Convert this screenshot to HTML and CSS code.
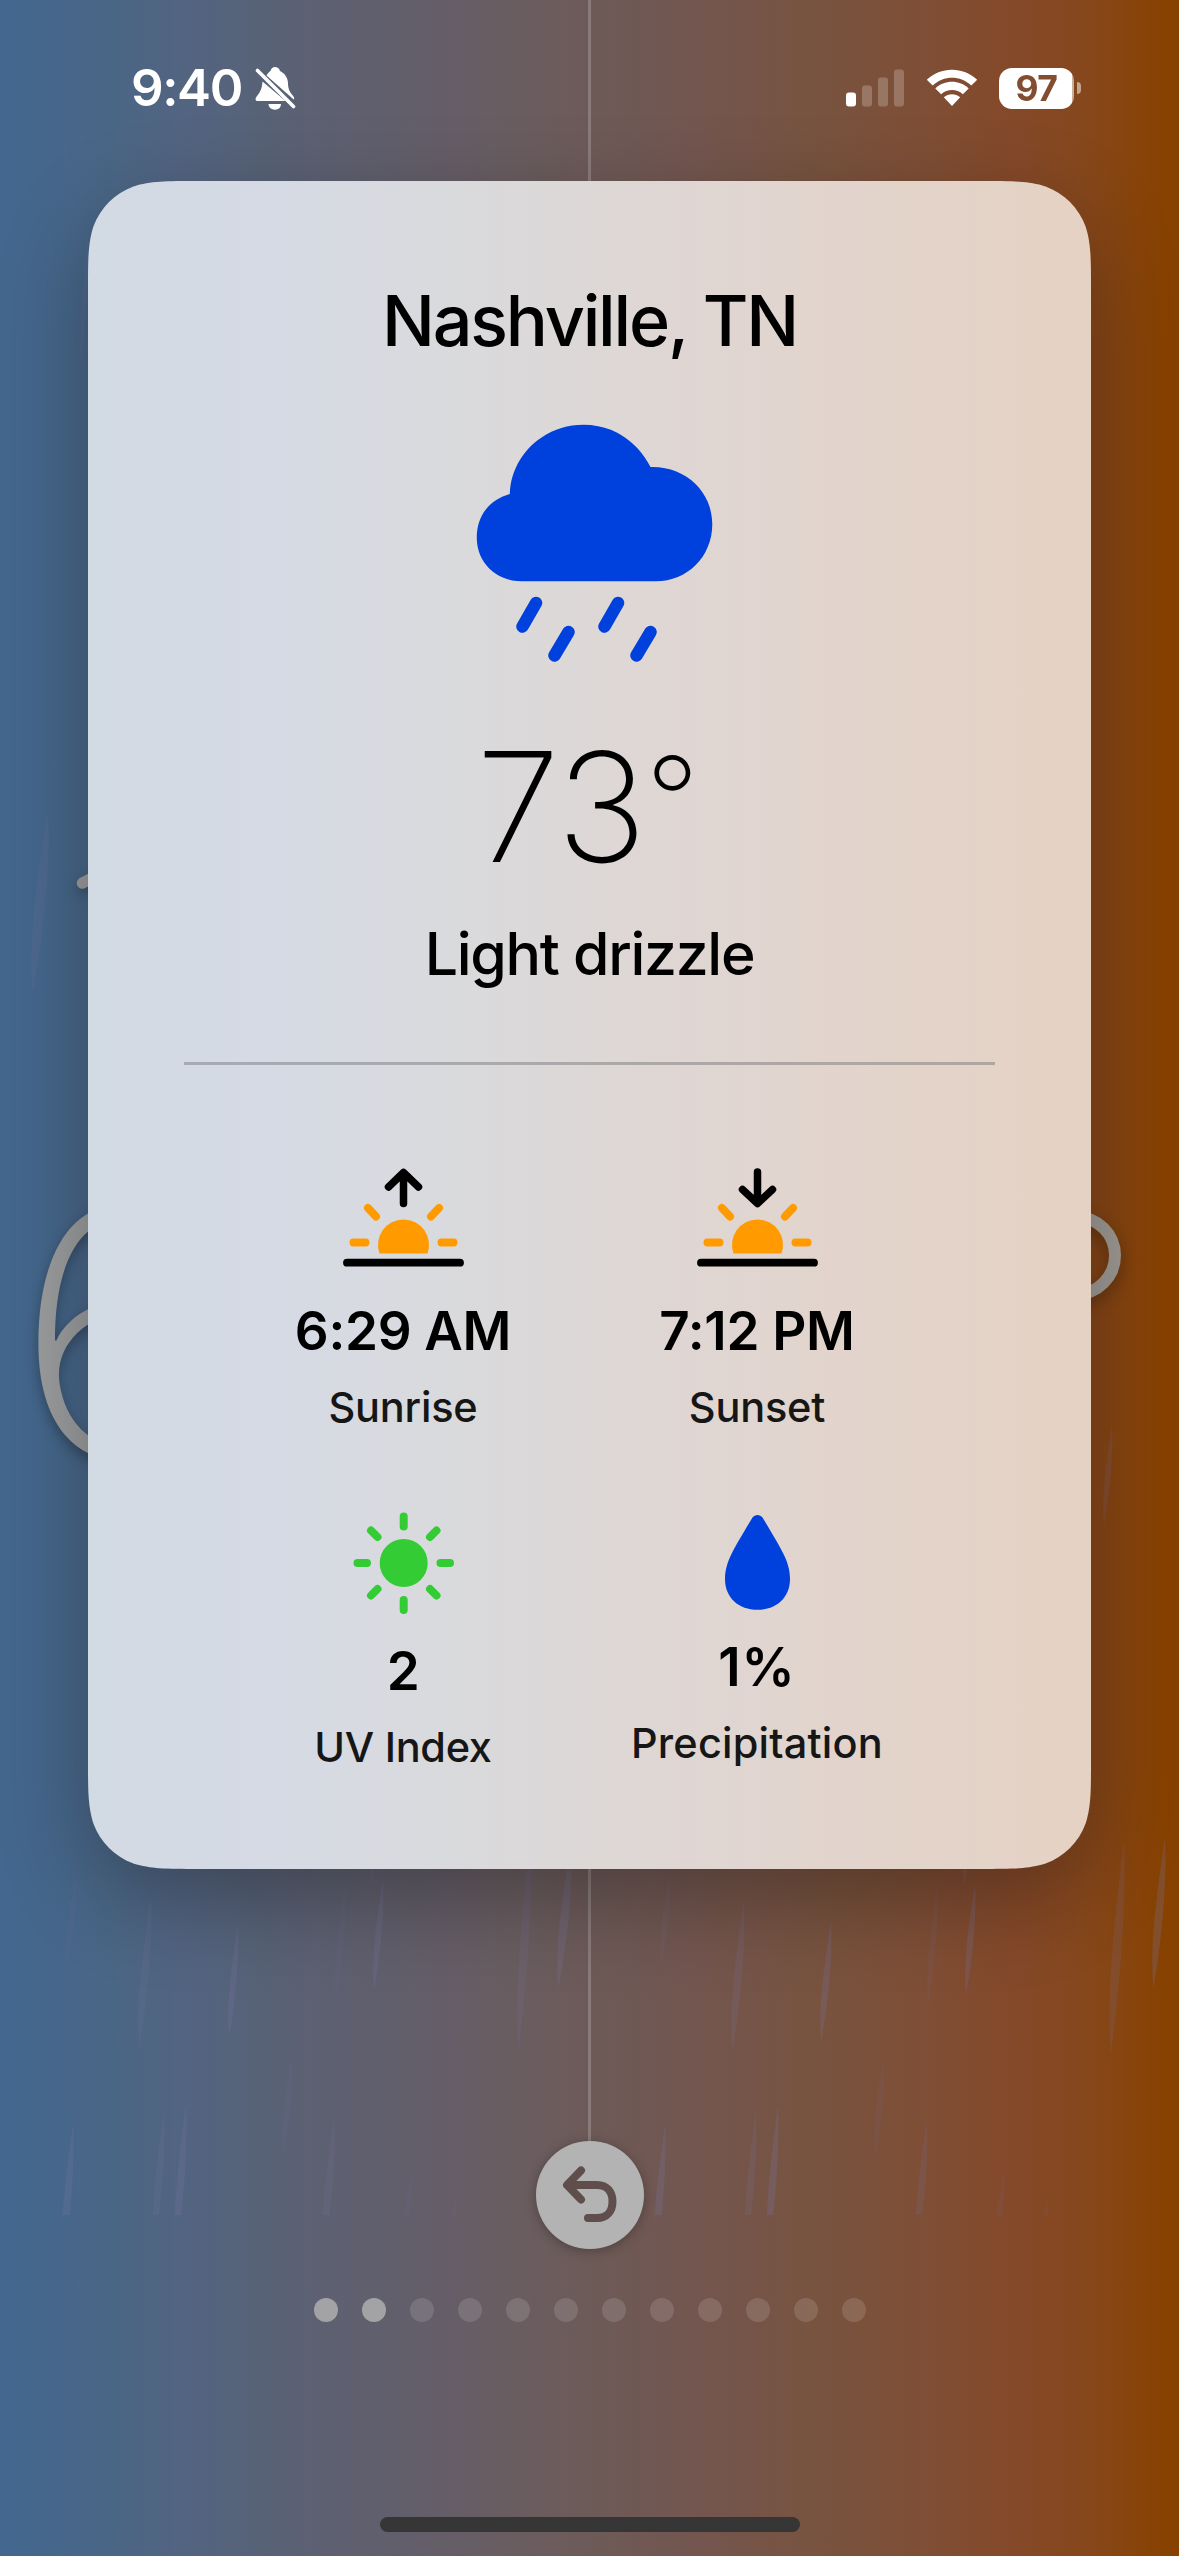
FILE: index.html
```html
<!DOCTYPE html>
<html lang="en">
<head>
<meta charset="utf-8">
<title>Weather</title>
<link rel="stylesheet" href="styles.css">
</head>
<body>
<div class="screen">
  <div class="scene" aria-hidden="true">
    <svg class="rain" width="1179" height="2215" viewBox="0 0 1179 2215">
      <defs><path id="drop" d="M10 0C12 35 6 75 1 100C-2 70 4 35 10 0Z"/></defs>
      <g class="rain-soft">
        <use href="#drop" transform="translate(80 230) scale(.8 1.4)"/>
        <use href="#drop" transform="translate(66 1874) scale(1 .94)"/>
        <use href="#drop" transform="translate(282 2056) scale(1 1)"/>
        <use href="#drop" transform="translate(335 1886) scale(1 1.14)"/>
        <use href="#drop" transform="translate(660 1874) scale(1 .92)"/>
        <use href="#drop" transform="translate(874 2055) scale(1 1.04)"/>
        <use href="#drop" transform="translate(927 1886) scale(1 1.2)"/>
        <use href="#drop" transform="translate(402 2170) scale(1 .9)"/>
        <use href="#drop" transform="translate(994 2170) scale(1 .9)"/>
        <use href="#drop" transform="translate(446 2198) scale(1 .6)"/>
        <use href="#drop" transform="translate(1038 2198) scale(1 .6)"/>
      </g>
      <g class="rain-mid">
        <use href="#drop" transform="translate(31 810) scale(1.7 1.84)"/>
        <use href="#drop" transform="translate(1103 1425) scale(.9 1)"/>
        <use href="#drop" transform="translate(138 1896) scale(1.3 1.51)"/>
        <use href="#drop" transform="translate(370 1790) scale(1 .97)"/>
        <use href="#drop" transform="translate(963 1790) scale(1 .97)"/>
        <use href="#drop" transform="translate(517 1830) scale(1.4 2.21)"/>
        <use href="#drop" transform="translate(731 1899) scale(1.3 1.53)"/>
        <use href="#drop" transform="translate(1109 1839) scale(1.5 2.16)"/>
        <use href="#drop" transform="translate(152 2109) scale(1.2 1.5)"/>
        <use href="#drop" transform="translate(744 2109) scale(1.2 1.5)"/>
        <use href="#drop" transform="translate(322 2119) scale(1.2 1.4)"/>
        <use href="#drop" transform="translate(915 2119) scale(1.2 1.4)"/>
      </g>
      <g class="rain-strong">
        <use href="#drop" transform="translate(228 1922) scale(1 1.16)"/>
        <use href="#drop" transform="translate(373 1878) scale(1 1.13)"/>
        <use href="#drop" transform="translate(557 1844) scale(1.4 1.44)"/>
        <use href="#drop" transform="translate(820 1922) scale(1.1 1.2)"/>
        <use href="#drop" transform="translate(965 1884) scale(1 1.1)"/>
        <use href="#drop" transform="translate(1152 1837) scale(1.3 1.52)"/>
        <use href="#drop" transform="translate(61 2124) scale(1.2 1.5)"/>
        <use href="#drop" transform="translate(653 2124) scale(1.2 1.5)"/>
        <use href="#drop" transform="translate(174 2104) scale(1.2 1.6)"/>
        <use href="#drop" transform="translate(766 2104) scale(1.2 1.6)"/>
      </g>
    </svg>
    <svg class="stroke-end" width="40" height="30" viewBox="72 864 40 30"><path d="M82.500 883L98 875"/></svg>
    <span class="temp-digit">6</span>
    <span class="temp-degree"></span>
    <span class="center-line"></span>
    <span class="card-shadow"></span>
  </div>

  <header class="status">
    <div class="status-left">
      <span class="clock">9:40</span>
      <svg class="bell" width="42" height="46" viewBox="254 65 42 46">
        <path class="white" d="M262.500 81.500L285.500 101H257.500C255 101 255 98.500 257 96C260.500 92 262 88 262.500 81.500Z"/>
        <path class="white" d="M266.500 75.500C268 73 269.500 71.500 270.500 71C271 68.500 273 67 275 67S279.500 68.500 280 71C285 73.500 288 78 288 83.500C288 90 291 93.500 293.500 96.500C294.500 98 294.300 99 293.700 99.500Z"/>
        <path class="white" d="M268.500 104H281C281 107.500 278.500 109.700 275 109.700S268.500 107.500 268.500 104Z"/>
        <path class="slash" d="M257.500 70.500L293.500 106.500"/>
      </svg>
    </div>
    <div class="status-right">
      <svg width="58" height="38" viewBox="0 0 58 38">
        <rect class="white" x="0" y="23.500" width="10" height="14" rx="3"/>
        <g class="bar-off"><rect x="16" y="16.500" width="10" height="21" rx="3"/><rect x="32" y="8.500" width="10" height="29" rx="3"/><rect x="48" y="0.500" width="10" height="37" rx="3"/></g>
      </svg>
      <svg class="wifi" width="52" height="38" viewBox="0 0 52 38">
        <path class="white" d="M.8 10.800C14.500-2.700 37.500-2.700 51.200 10.800L45.300 16.600C34.500 6.200 17.500 6.200 6.700 16.600ZM9.300 19.500C18.500 10.600 33.500 10.600 42.700 19.500L36.800 25.200C30.800 19.600 21.200 19.600 15.200 25.200ZM17.800 28.300C22.500 24.300 29.500 24.300 34.200 28.300L26 37Z"/>
      </svg>
      <div class="battery"><span class="battery-body">97</span><span class="battery-cap"></span></div>
    </div>
  </header>

  <main class="card">
    <h1 class="city">Nashville, TN</h1>
    <svg class="cloud" width="321" height="240" viewBox="429 424 321 240">
      <path class="blue" d="M522 581.300C495 581.300 476.800 561.500 476.800 538C476.800 515 490 499.500 509.800 494C511 456 543 424.800 583.500 424.800C613 424.800 637 441 650.500 467C686 466 712.300 492 712.300 524C712.300 557 687 581.300 656 581.300Z"/>
      <path class="blue-line" d="M536 603L522.500 626.500M568.500 632L554.500 655.500M618 603L604.500 626.500M650.500 632L636.500 655.500"/>
    </svg>
    <p class="temperature">73<span class="degree">°</span></p>
    <p class="condition">Light drizzle</p>
    <hr class="divider">
    <section class="facts">
      <div class="fact">
        <svg width="124" height="113" viewBox="341 1166 124 113">
          <path class="ink" d="M403.500 1203.500V1173M388.500 1187L403.500 1172.500L418.500 1187"/>
          <path class="sun-low" d="M379.500 1253.500A25.500 25.500 0 1 1 427.500 1253.500Z"/>
          <path class="ray" d="M353.500 1242.500H365.500M441.500 1242.500H453.500M368 1208L376 1216.500M439 1208L431 1216.500"/>
          <path class="horizon" d="M347 1262.700H460"/>
        </svg>
        <strong class="value">6:29 AM</strong><span class="label">Sunrise</span>
      </div>
      <div class="fact">
        <svg width="124" height="113" viewBox="341 1166 124 113">
          <path class="ink" d="M403.500 1172V1202.500M388.500 1189.500L403.500 1203.500L418.500 1189.500"/>
          <path class="sun-low" d="M379.500 1253.500A25.500 25.500 0 1 1 427.500 1253.500Z"/>
          <path class="ray" d="M353.500 1242.500H365.500M441.500 1242.500H453.500M368 1208L376 1216.500M439 1208L431 1216.500"/>
          <path class="horizon" d="M347 1262.700H460"/>
        </svg>
        <strong class="value">7:12 PM</strong><span class="label">Sunset</span>
      </div>
      <div class="fact">
        <svg width="106" height="108.500" viewBox="350 1510 106 108.500">
          <circle class="green" cx="403.700" cy="1563" r="24"/>
          <path class="green-ray" d="M403.700 1516.500V1526.500M403.700 1600V1610M357.500 1563H367M440.500 1563H450M371 1530.500L377.500 1537M436.500 1530.500L430 1537M371 1595.500L377.500 1589M436.500 1595.500L430 1589"/>
        </svg>
        <strong class="value">2</strong><span class="label snug">UV Index</span>
      </div>
      <div class="fact">
        <svg width="70" height="105" viewBox="722 1510 70 105">
          <path class="blue" d="M752.500 1517.500C755 1514 760 1514 762.500 1517.500C770 1530 778.500 1544 783.500 1554C787.500 1562 790 1570 790 1579C790 1598 776 1609.800 757.500 1609.800S725 1598 725 1579C725 1570 727.500 1562 731.500 1554C736.500 1544 745 1530 752.500 1517.500Z"/>
        </svg>
        <strong class="value percent">1%</strong><span class="label wide">Precipitation</span>
      </div>
    </section>
  </main>

  <button class="undo" type="button" aria-label="Back">
    <svg width="108" height="108" viewBox="536 2141 108 108"><path d="M581 2170.500L567 2185L581 2199.500M569 2185H597C607 2185 612.500 2192 612.500 2201.500S607 2218 597 2218H588"/></svg>
  </button>
  <div class="dots">
    <i class="dot on"></i><i class="dot on"></i><i class="dot"></i><i class="dot"></i><i class="dot"></i><i class="dot"></i><i class="dot"></i><i class="dot"></i><i class="dot"></i><i class="dot"></i><i class="dot"></i><i class="dot"></i>
  </div>
  <div class="home"></div>
</div>
</body>
</html>
```
FILE: styles.css
```css
* { box-sizing: border-box; margin: 0; padding: 0; }
body { font-family: Inter, "Liberation Sans", sans-serif; }
svg { display: block; flex: none; fill: none; }

.screen {
  position: relative;
  width: 1179px;
  height: 2556px;
  overflow: hidden;
  display: flex;
  flex-direction: column;
  align-items: center;
  background: linear-gradient(90deg, #43678f 0, #46678b 60px, #4b6685 118px, #536480 190px, #586276 270px, #5e6071 330px, #635e6a 420px, #6a5d60 520px, #6d5a57 600px, #735650 690px, #78533f 820px, #7f4e35 930px, #84492a 1010px, #86471c 1085px, #87440b 1135px, #874100 1170px);
}

/* Backdrop behind the card */
.scene { position: absolute; inset: 0; }
.scene > * { position: absolute; }
.rain { left: 0; top: 0; fill: #7873a0; }
.rain-soft { opacity: .12; }
.rain-mid { opacity: .18; }
.rain-strong { opacity: .26; }
.stroke-end { left: 72px; top: 864px; stroke: #9d9c9c; stroke-width: 11.5; stroke-linecap: round; overflow: visible; filter: drop-shadow(0 5px 6px rgba(0,0,0,.25)); }
.temp-digit { left: 13px; top: 1159px; font-size: 346px; line-height: 346px; font-weight: 200; color: #9c9d9e; text-shadow: 0 6px 12px rgba(0,0,0,.3); transform: scaleX(1.08); transform-origin: 0 50%; }
.temp-degree { left: 1032px; top: 1211px; width: 89px; height: 89px; border: 12.5px solid #9e9993; border-radius: 50%; filter: drop-shadow(0 6px 8px rgba(0,0,0,.3)); }
.center-line { left: 588px; top: 0; width: 3px; height: 2187px; background: rgba(255,255,255,.2); }
.card-shadow { left: 88px; top: 181px; width: 1003px; height: 1688px; border-radius: 80px; box-shadow: 0 30px 90px rgba(0,0,0,.3); }

/* Status bar */
.status { position: relative; width: 100%; height: 181px; padding: 0 98px 4px 131px; display: flex; justify-content: space-between; color: #fff; }
.status-left, .status-right { display: flex; height: 46px; margin-top: 65px; align-items: center; }
.clock { width: 123px; font-size: 51px; line-height: 46px; font-weight: 600; letter-spacing: -1.4px; white-space: nowrap; }
.white { fill: #fff; }
.slash { stroke: #fff; stroke-width: 3.6; stroke-linecap: round; }
.bar-off { fill: #fff; opacity: .22; }
.wifi { margin-left: 22px; }
.battery { display: flex; align-items: center; margin-left: 21px; }
.battery-body { width: 75px; height: 41px; border-radius: 13px; background: linear-gradient(90deg, #fff 73px, #c9b09d 73px); color: #824d30; font-size: 35.500px; line-height: 41px; font-weight: 700; letter-spacing: -.5px; text-align: center; }
.battery-cap { width: 4px; height: 12px; margin-left: 3px; border-radius: 0 4px 4px 0; background: #c3a68f; }

/* Card */
.card {
  position: relative;
  width: 1003px;
  height: 1688px;
  padding-top: 98px;
  display: flex;
  flex-direction: column;
  align-items: center;
  background: linear-gradient(90deg, #d2dae4 0, #d5dae4 180px, #d9dadd 350px, #dcd8d7 480px, #dfd6d3 600px, #e2d4cc 760px, #e5d2c3 1003px);
  clip-path: path("M110.060 0H892.940C924.630 0 940.470 0 957.530 5.390C976.160 12.170 990.830 26.840 997.610 45.470C1003 62.530 1003 78.370 1003 110.060V1577.940C1003 1609.630 1003 1625.470 997.610 1642.530C990.830 1661.160 976.160 1675.830 957.530 1682.610C940.470 1688 924.630 1688 892.940 1688H110.060C78.370 1688 62.530 1688 45.470 1682.610C26.840 1675.830 12.170 1661.160 5.390 1642.530C0 1625.470 0 1609.630 0 1577.940V110.060C0 78.370 0 62.530 5.390 45.470C12.170 26.840 26.840 12.170 45.470 5.390C62.530 0 78.370 0 110.060 0Z");
  color: #000;
}
.city { font-size: 70px; line-height: 84px; font-weight: 500; letter-spacing: -2.200px; }
.cloud { margin-top: 61px; }
.blue { fill: #0040dd; }
.blue-line { stroke: #0040dd; stroke-width: 12.500; stroke-linecap: round; }
.temperature { margin-top: 63px; padding-right: 5px; font-size: 152px; line-height: 160px; font-weight: 200; letter-spacing: -1px; }
.degree { position: relative; top: -21px; font-size: 117px; line-height: 0; font-weight: 230; }
.condition { margin-top: 32px; font-size: 59px; line-height: 70px; font-weight: 500; letter-spacing: -1.300px; }
.divider { width: 811px; height: 3px; margin-top: 73px; border: 0; background: rgba(60,60,67,.3); }
.facts { align-self: flex-start; margin: 101px 0 0 138px; display: grid; grid-template-columns: 354px 354px; row-gap: 77.500px; }
.fact { display: flex; flex-direction: column; align-items: center; }
.value { margin-top: 20px; font-size: 53px; line-height: 64px; font-weight: 600; letter-spacing: -.3px; }
.percent { letter-spacing: 1px; }
.label { margin-top: 19px; margin-bottom: .5px; font-size: 41.500px; line-height: 50px; font-weight: 450; letter-spacing: -.2px; color: #161616; }
.label.snug { letter-spacing: -.3px; }
.label.wide { letter-spacing: .2px; }
.ink { stroke: #000; stroke-width: 7.500; stroke-linecap: round; stroke-linejoin: round; }
.horizon { stroke: #000; stroke-width: 7.800; stroke-linecap: round; }
.sun-low { fill: #ff9b00; }
.ray { stroke: #ff9b00; stroke-width: 8; stroke-linecap: round; }
.green { fill: #34cc35; }
.green-ray { stroke: #34cc35; stroke-width: 8; stroke-linecap: round; }

/* Bottom controls */
.undo { position: relative; width: 108px; height: 108px; margin-top: 272px; border: 0; border-radius: 50%; background: #b3b3b3; box-shadow: 0 2px 12px rgba(0,0,0,.28); }
.undo svg { stroke: #5f4e4c; stroke-width: 8; stroke-linecap: round; stroke-linejoin: round; }
.dots { position: relative; display: flex; gap: 24px; margin-top: 49px; }
.dot { width: 24px; height: 24px; border-radius: 50%; background: rgba(255,255,255,.13); }
.dot.on { background: #a3a3a5; }
.home { position: relative; width: 420px; height: 15px; margin-top: 195px; border-radius: 8px; background: #363636; }
```
